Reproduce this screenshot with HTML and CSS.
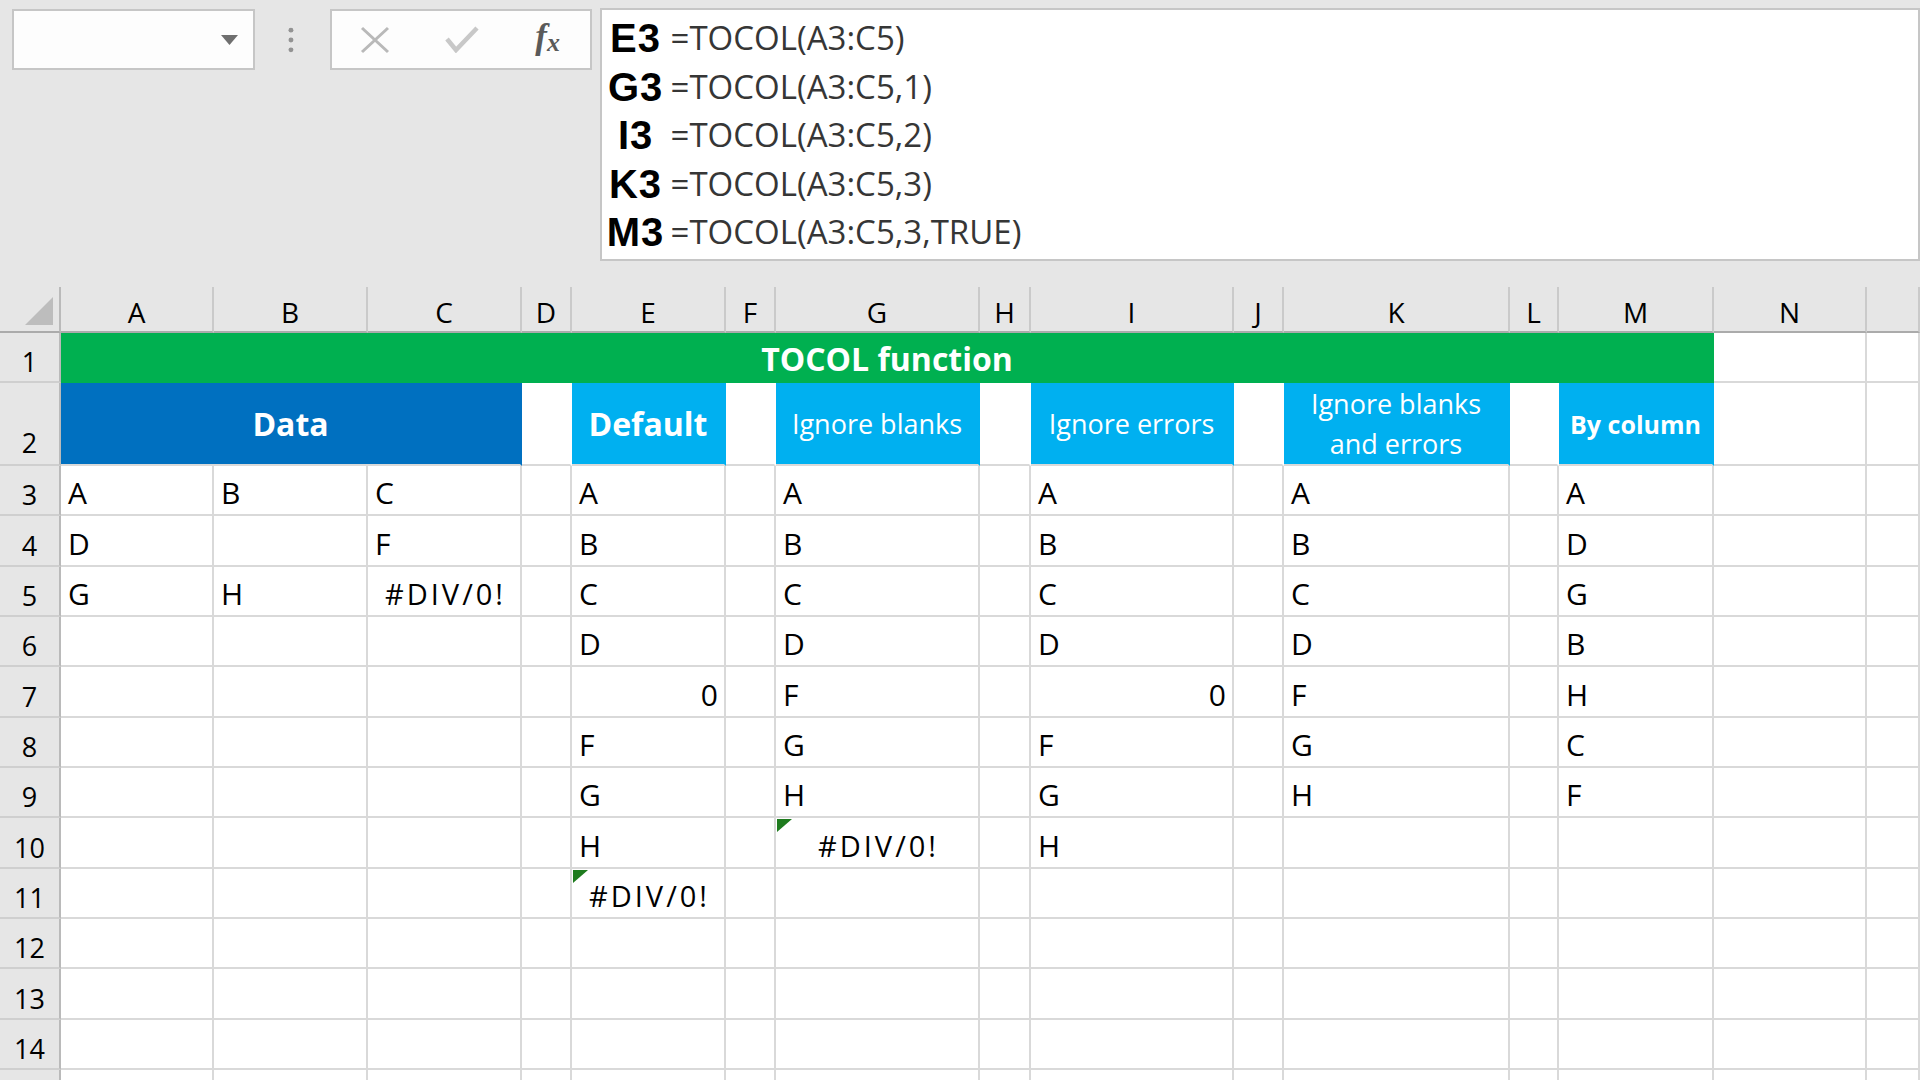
FILE: index.html
```html
<!DOCTYPE html>
<html lang="en">
<head>
<meta charset="utf-8">
<title>TOCOL function</title>
<link rel="stylesheet" href="styles.css">
</head>
<body>
<div class="topbar">
  <div class="namebox">
    <svg class="dd" viewBox="0 0 17 10" width="17" height="10"><path d="M0 0H17L8.5 10Z" fill="#6f6f6f"/></svg>
  </div>
  <svg class="grip" width="6" height="26" viewBox="0 0 6 26"><circle cx="3" cy="3" r="2.5"/><circle cx="3" cy="13" r="2.5"/><circle cx="3" cy="23" r="2.5"/></svg>
  <div class="btns">
    <div class="btn bx"><svg width="30" height="28" viewBox="0 0 30 28"><path d="M2 2L28 26M28 2L2 26" stroke="#b9b9b9" stroke-width="3" fill="none"/></svg></div>
    <div class="btn bok"><svg width="34" height="27" viewBox="0 0 34 27"><path d="M2 13L11 24L32 2" stroke="#c8c8c8" stroke-width="4.5" fill="none"/></svg></div>
    <div class="btn bfx"><span class="fx">f<span class="sx">x</span></span></div>
  </div>
  <div class="fbox">
    <div class="fline"><span class="lbl">E3</span><span class="ftx">=TOCOL(A3:C5)</span></div>
    <div class="fline"><span class="lbl">G3</span><span class="ftx">=TOCOL(A3:C5,1)</span></div>
    <div class="fline"><span class="lbl">I3</span><span class="ftx">=TOCOL(A3:C5,2)</span></div>
    <div class="fline"><span class="lbl">K3</span><span class="ftx">=TOCOL(A3:C5,3)</span></div>
    <div class="fline"><span class="lbl">M3</span><span class="ftx">=TOCOL(A3:C5,3,TRUE)</span></div>
  </div>
</div>

<div class="sheet">
  <div class="corner"><svg width="28" height="28" viewBox="0 0 28 28"><path d="M28 0V28H0Z" fill="#bdbdbd"/></svg></div>
  <div class="ch">A</div><div class="ch">B</div><div class="ch">C</div><div class="ch">D</div><div class="ch">E</div><div class="ch">F</div><div class="ch">G</div><div class="ch">H</div><div class="ch">I</div><div class="ch">J</div><div class="ch">K</div><div class="ch">L</div><div class="ch">M</div><div class="ch">N</div><div class="ch"></div>

  <div class="rh">1</div>
  <div class="c title">TOCOL function</div>
  <div class="c"></div><div class="c"></div>

  <div class="rh rh2">2</div>
  <div class="c hd dark bold data">Data</div>
  <div class="c blank"></div>
  <div class="c hd light bold">Default</div>
  <div class="c blank"></div>
  <div class="c hd light">Ignore blanks</div>
  <div class="c blank"></div>
  <div class="c hd light">Ignore errors</div>
  <div class="c blank"></div>
  <div class="c hd light">Ignore blanks<br>and errors</div>
  <div class="c blank"></div>
  <div class="c hd light by">By column</div>
  <div class="c"></div><div class="c"></div>

  <div class="rh">3</div>
  <div class="c">A</div><div class="c">B</div><div class="c">C</div><div class="c"></div><div class="c">A</div><div class="c"></div><div class="c">A</div><div class="c"></div><div class="c">A</div><div class="c"></div><div class="c">A</div><div class="c"></div><div class="c">A</div><div class="c"></div><div class="c"></div>

  <div class="rh">4</div>
  <div class="c">D</div><div class="c"></div><div class="c">F</div><div class="c"></div><div class="c">B</div><div class="c"></div><div class="c">B</div><div class="c"></div><div class="c">B</div><div class="c"></div><div class="c">B</div><div class="c"></div><div class="c">D</div><div class="c"></div><div class="c"></div>

  <div class="rh">5</div>
  <div class="c">G</div><div class="c">H</div><div class="c err">#DIV/0!</div><div class="c"></div><div class="c">C</div><div class="c"></div><div class="c">C</div><div class="c"></div><div class="c">C</div><div class="c"></div><div class="c">C</div><div class="c"></div><div class="c">G</div><div class="c"></div><div class="c"></div>

  <div class="rh">6</div>
  <div class="c"></div><div class="c"></div><div class="c"></div><div class="c"></div><div class="c">D</div><div class="c"></div><div class="c">D</div><div class="c"></div><div class="c">D</div><div class="c"></div><div class="c">D</div><div class="c"></div><div class="c">B</div><div class="c"></div><div class="c"></div>

  <div class="rh">7</div>
  <div class="c"></div><div class="c"></div><div class="c"></div><div class="c"></div><div class="c num">0</div><div class="c"></div><div class="c">F</div><div class="c"></div><div class="c num">0</div><div class="c"></div><div class="c">F</div><div class="c"></div><div class="c">H</div><div class="c"></div><div class="c"></div>

  <div class="rh">8</div>
  <div class="c"></div><div class="c"></div><div class="c"></div><div class="c"></div><div class="c">F</div><div class="c"></div><div class="c">G</div><div class="c"></div><div class="c">F</div><div class="c"></div><div class="c">G</div><div class="c"></div><div class="c">C</div><div class="c"></div><div class="c"></div>

  <div class="rh">9</div>
  <div class="c"></div><div class="c"></div><div class="c"></div><div class="c"></div><div class="c">G</div><div class="c"></div><div class="c">H</div><div class="c"></div><div class="c">G</div><div class="c"></div><div class="c">H</div><div class="c"></div><div class="c">F</div><div class="c"></div><div class="c"></div>

  <div class="rh">10</div>
  <div class="c"></div><div class="c"></div><div class="c"></div><div class="c"></div><div class="c">H</div><div class="c"></div><div class="c err tri">#DIV/0!</div><div class="c"></div><div class="c">H</div><div class="c"></div><div class="c"></div><div class="c"></div><div class="c"></div><div class="c"></div><div class="c"></div>

  <div class="rh">11</div>
  <div class="c"></div><div class="c"></div><div class="c"></div><div class="c"></div><div class="c err tri">#DIV/0!</div><div class="c"></div><div class="c"></div><div class="c"></div><div class="c"></div><div class="c"></div><div class="c"></div><div class="c"></div><div class="c"></div><div class="c"></div><div class="c"></div>

  <div class="rh">12</div>
  <div class="c"></div><div class="c"></div><div class="c"></div><div class="c"></div><div class="c"></div><div class="c"></div><div class="c"></div><div class="c"></div><div class="c"></div><div class="c"></div><div class="c"></div><div class="c"></div><div class="c"></div><div class="c"></div><div class="c"></div>

  <div class="rh">13</div>
  <div class="c"></div><div class="c"></div><div class="c"></div><div class="c"></div><div class="c"></div><div class="c"></div><div class="c"></div><div class="c"></div><div class="c"></div><div class="c"></div><div class="c"></div><div class="c"></div><div class="c"></div><div class="c"></div><div class="c"></div>

  <div class="rh">14</div>
  <div class="c"></div><div class="c"></div><div class="c"></div><div class="c"></div><div class="c"></div><div class="c"></div><div class="c"></div><div class="c"></div><div class="c"></div><div class="c"></div><div class="c"></div><div class="c"></div><div class="c"></div><div class="c"></div><div class="c"></div>

  <div class="rh"></div>
  <div class="c"></div><div class="c"></div><div class="c"></div><div class="c"></div><div class="c"></div><div class="c"></div><div class="c"></div><div class="c"></div><div class="c"></div><div class="c"></div><div class="c"></div><div class="c"></div><div class="c"></div><div class="c"></div><div class="c"></div>
</div>
</body>
</html>
```

FILE: styles.css
```css
* { box-sizing: border-box; margin: 0; padding: 0; }
html, body { width: 1920px; height: 1080px; overflow: hidden; }
body {
  background: #e6e6e6;
  font-family: "Open Sans", "Noto Sans", sans-serif;
  color: #000;
}

/* ---------- formula bar ---------- */
.topbar {
  height: 287px;
  display: flex;
  align-items: flex-start;
  padding: 8px 0 0 12px;
}
.namebox {
  margin-top: 1px;
  width: 246px;
  height: 61px;
  border: 2px solid #c6c6c6;
  background: #fdfdfd;
  display: flex;
  align-items: center;
  justify-content: flex-end;
  padding-right: 15px;
}
.namebox .dd { display: block; }
.grip { display: block; margin: 19px 0 0 33px; fill: #939393; }
.btns {
  margin: 1px 0 0 36px;
  width: 262px;
  height: 61px;
  border: 2px solid #c6c6c6;
  background: #fdfdfd;
  display: flex;
}
.btn { display: flex; align-items: center; justify-content: center; }
.btn svg { display: block; }
.bx { width: 86px; }
.bok { width: 88px; }
.bfx { width: 84px; }
.fx {
  font-family: "Liberation Serif", "Times New Roman", serif;
  font-style: italic;
  font-weight: 700;
  font-size: 35px;
  line-height: 35px;
  color: #5a5a5a;
}
.fx .sx { font-size: 26px; vertical-align: -3px; }

.fbox {
  margin-left: 8px;
  width: 1340px;
  height: 253px;
  border: 2px solid #c6c6c6;
  background: #fff;
  padding: 4px 0 0 5px;
}
.fline {
  height: 48.5px;
  line-height: 48.5px;
  font-size: 33px;
  white-space: nowrap;
}
.lbl {
  display: inline-block;
  width: 58px;
  text-align: center;
  font-family: "Liberation Sans", Arial, sans-serif;
  font-weight: 700;
  font-size: 40px;
  letter-spacing: 1px;
  color: #000;
}
.ftx {
  margin-left: 6px;
  font-size: 33px;
  color: #363636;
  vertical-align: 2px;
}

/* ---------- sheet ---------- */
.sheet {
  display: grid;
  grid-template-columns: 61px 153px 154px 154px 50px 154px 50px 204px 51px 203px 50px 226px 49px 155px 153px 53px;
  grid-template-rows: 46px 50px 83px 50px 51px 50px 50px 51px 50px 50px 51px 50px 50px 51px 50px 50px;
  background: #fff;
}
.corner {
  background: #e6e6e6;
  border-right: 2px solid #bababa;
  border-bottom: 2px solid #ababab;
  display: flex;
  align-items: flex-end;
  justify-content: flex-end;
  padding: 0 6px 6px 0;
}
.corner svg { display: block; }
.ch {
  background: #e6e6e6;
  border-right: 2px solid #cacaca;
  border-bottom: 2px solid #ababab;
  font-size: 28px;
  line-height: 28px;
  display: flex;
  align-items: flex-end;
  justify-content: center;
  padding-bottom: 5px;
}
.rh {
  background: #e6e6e6;
  border-right: 2px solid #bababa;
  border-bottom: 2px solid #cfcfcf;
  font-size: 27px;
  line-height: 27px;
  display: flex;
  align-items: flex-end;
  justify-content: center;
  padding-bottom: 6px;
}
.rh2 { line-height: 20px; padding-bottom: 11px; }

.c {
  border-right: 2px solid #d9d9d9;
  border-bottom: 2px solid #d9d9d9;
  font-size: 30px;
  line-height: 30px;
  display: flex;
  align-items: flex-end;
  padding: 0 6px 6px 7px;
  white-space: nowrap;
}
.c.num { justify-content: flex-end; }
.c.err {
  justify-content: center;
  font-size: 29px;
  letter-spacing: 3px;
  padding-left: 3px;
  padding-right: 0;
}
.c.tri { position: relative; }
.c.tri::before {
  content: "";
  position: absolute;
  top: 1px;
  left: 1px;
  border-top: 13px solid #1e7b1e;
  border-right: 15px solid transparent;
}

.title {
  grid-column: span 13;
  background: #00b050;
  border-color: #00b050;
  color: #fff;
  font-weight: 700;
  font-size: 32px;
  line-height: 32px;
  justify-content: center;
  padding-bottom: 6px;
}
.hd {
  align-items: center;
  justify-content: center;
  text-align: center;
  color: #fff;
  padding: 0;
  font-size: 27px;
  line-height: 40px;
  white-space: normal;
}
.dark { background: #0070c0; border-right-color: #0070c0; }
.light { background: #00b0f0; border-right-color: #00b0f0; }
.data { grid-column: span 3; }
.bold { font-weight: 700; font-size: 32px; }
.by { font-weight: 700; font-size: 25px; }
.blank { border-right-color: #fff; }
```
